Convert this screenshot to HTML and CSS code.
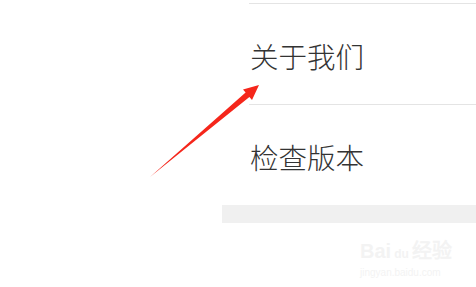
FILE: index.html
```html
<!DOCTYPE html>
<html lang="zh-CN">
  <head>
    <meta charset="UTF-8" />
    <title>设置</title>
    <link rel="stylesheet" href="styles.css">
  </head>
  <body>
    <div class="panel">
      <div class="row">关于我们</div>
      <div class="row">检查版本</div>
      <div class="band"></div>
    </div>
    <!-- red annotation arrow -->
    <svg class="arrow" width="476" height="287" viewBox="0 0 476 287">
      <polygon points="150,177 245.6,92.4 243,89.4 259,85 252,100 249.4,97" fill="#f5261b" />
    </svg>
    <div class="mark">
      <div class="mark-top">Bai<span class="paw">du</span>经验</div>
      <div class="mark-url">jingyan.baidu.com</div>
    </div>
  </body>
</html>
```

FILE: styles.css
```css
body {
  margin: 0;
  background-color: #fff;
  font-family: "Noto Sans CJK SC", "Noto Sans", sans-serif;
  width: 476px;
  height: 287px;
  overflow: hidden;
  position: relative;
}
.panel {
  margin-left: 222px;
  padding-top: 3px;
}
.row {
  margin-left: 27px;
  border-top: 1px solid #e4e4e4;
  display: flex;
  align-items: center;
  padding-left: 1px;
  padding-top: 2px;
  height: 98px;
  font-size: 28.5px;
  font-weight: 300;
  color: #333;
}
.band {
  height: 18px;
  background-color: #f0f0f0;
}
.arrow {
  position: absolute;
  top: 0;
  left: 0;
}
.mark {
  position: absolute;
  left: 360px;
  top: 238px;
  color: #f3f3f3;
  font-family: "Liberation Sans", sans-serif;
}
.mark-top {
  font-size: 20px;
  font-weight: bold;
  line-height: 26px;
}
.paw {
  font-size: 12px;
  margin: 0 3px;
}
.mark-url {
  font-size: 10px;
  line-height: 12px;
}
```
